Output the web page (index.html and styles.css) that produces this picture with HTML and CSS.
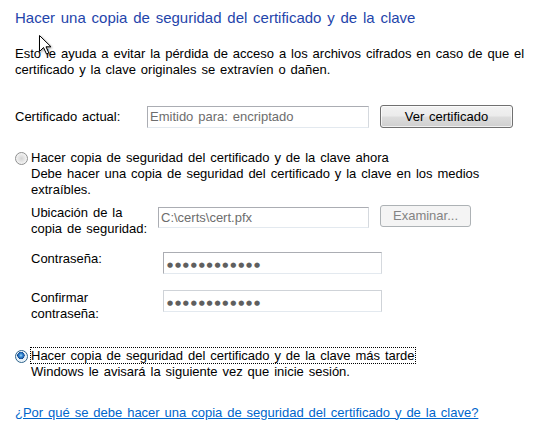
FILE: index.html
```html
<!DOCTYPE html>
<html lang="es">
<head>
<meta charset="utf-8">
<title>Exportar certificado</title>
<link rel="stylesheet" href="styles.css">
</head>
<body>
<div class="page">
  <h1 class="title">Hacer una copia de seguridad del certificado y de la clave</h1>
  <p class="intro">Esto le ayuda a evitar la pérdida de acceso a los archivos cifrados en caso de que el<br>certificado y la clave originales se extravíen o dañen.</p>

  <div class="cert-row">
    <span class="cert-label">Certificado actual:</span>
    <div class="field cert-field">Emitido para: encriptado</div>
    <button class="btn cert-btn">Ver certificado</button>
  </div>

  <div class="option option-now">
    <span class="radio"></span>
    <div class="option-text">
      <div>Hacer copia de seguridad del certificado y de la clave ahora</div>
      <div>Debe hacer una copia de seguridad del certificado y la clave en los medios<br>extraíbles.</div>
    </div>
  </div>

  <div class="subform">
    <div class="sub-row loc-row">
      <span class="loc-label">Ubicación de la<br>copia de seguridad:</span>
      <div class="field loc-field">C:\certs\cert.pfx</div>
      <button class="btn btn-disabled loc-btn" disabled>Examinar...</button>
    </div>
    <div class="sub-row pass-row">
      <span class="pass-label">Contraseña:</span>
      <div class="field pass-field"><span class="dots">●●●●●●●●●●●●</span></div>
    </div>
    <div class="sub-row confirm-row">
      <span class="pass-label">Confirmar<br>contraseña:</span>
      <div class="field pass-field confirm-field"><span class="dots">●●●●●●●●●●●●</span></div>
    </div>
  </div>

  <div class="option option-later">
    <span class="radio radio-checked"></span>
    <div class="option-text">
      <div><span class="focus">Hacer copia de seguridad del certificado y de la clave más tarde</span></div>
      <div>Windows le avisará la siguiente vez que inicie sesión.</div>
    </div>
  </div>

  <a class="help-link" href="#">¿Por qué se debe hacer una copia de seguridad del certificado y de la clave?</a>

  <svg class="cursor" width="14" height="21" viewBox="0 0 14 21" aria-hidden="true">
    <path d="M0.5 0.5 V16.5 L4.5 12.5 L7.5 19 L9.8 18 L7 11.8 H12 Z" fill="#fff" stroke="#000" stroke-width="1" stroke-linejoin="miter"/>
  </svg>
</div>
</body>
</html>
```
FILE: styles.css
```css
html, body {
  margin: 0;
  background: #fff;
}

body {
  font-family: "Liberation Sans", Arial, sans-serif;
  font-size: 13px;
  line-height: 16px;
  word-spacing: 1.3px;
  color: #000;
}

.page {
  position: relative;
  width: 540px;
  height: 436px;
  box-sizing: border-box;
  padding: 8px 0 0 15px;
  overflow: hidden;
}

.title {
  margin: 0;
  font-size: 15px;
  line-height: 20px;
  font-weight: normal;
  word-spacing: 1.6px;
  color: #1f45ab;
  white-space: nowrap;
}

.intro {
  margin: 17.5px 0 0;
  white-space: nowrap;
}

.cert-row {
  display: flex;
  align-items: center;
  height: 23px;
  margin-top: 27.5px;
}

.cert-label {
  width: 132px;
  flex: none;
}

.field {
  box-sizing: border-box;
  height: 22px;
  border: 1px solid #abadb3;
  border-right-color: #d5d9de;
  border-bottom-color: #e3e9ef;
  padding: 0 2px;
  line-height: 20px;
  color: #6d6d6d;
  background: #fff;
  white-space: nowrap;
  overflow: hidden;
  flex: none;
}

.cert-field {
  width: 222px;
}

.btn {
  box-sizing: border-box;
  font-family: inherit;
  font-size: 13px;
  line-height: 16px;
  word-spacing: 1px;
  color: #000;
  border: 1px solid #707070;
  border-radius: 3px;
  background: linear-gradient(#f2f2f2 0%, #ebebeb 48%, #dddddd 52%, #cfcfcf 100%);
  box-shadow: inset 0 0 0 1px rgba(255, 255, 255, 0.7);
  padding: 0;
  flex: none;
}

.cert-btn {
  width: 133px;
  height: 23px;
  margin-left: 11px;
}

.btn-disabled {
  color: #838383;
  border-color: #adb2b5;
  background: #f4f4f4;
  box-shadow: none;
}

.option {
  display: flex;
  align-items: flex-start;
}

.option-now {
  margin-top: 21.5px;
}

.option-later {
  margin-top: 25.5px;
}

.radio {
  box-sizing: border-box;
  width: 13px;
  height: 13px;
  margin: 2px 3px 0 0;
  border-radius: 50%;
  border: 1px solid #8e8f8f;
  background: radial-gradient(circle at 50% 50%, #d4d4d4 0, #e8e8e8 45%, #f4f4f4 70%, #ffffff 100%);
  flex: none;
}

.radio-checked {
  border-color: #2c628b;
  background:
    radial-gradient(circle at 45% 40%, #a9dcf8 0, #3c8fd6 1.5px, #1b5fae 3px, #0f3f80 3.5px, rgba(255,255,255,0) 3.8px),
    radial-gradient(circle at 50% 50%, #cfe4f2 0, #eaf3f9 60%, #ffffff 100%);
}

.option-text {
  white-space: nowrap;
}

.focus {
  outline: 1px dotted #000;
}

.subform {
  padding-left: 16px;
  margin-top: 7.5px;
}

.sub-row {
  display: flex;
  align-items: flex-start;
}

.loc-label {
  width: 127px;
  flex: none;
}

.loc-field {
  width: 211px;
  height: 21px;
  line-height: 19px;
  margin-top: 2px;
}

.loc-btn {
  width: 91px;
  height: 22px;
  margin-left: 11px;
}

.pass-row {
  margin-top: 14px;
}

.confirm-row {
  margin-top: 16px;
}

.pass-label {
  width: 132px;
  flex: none;
}

.pass-field {
  width: 219px;
  margin-top: 1px;
}

.confirm-field {
  margin-top: 0;
  border-color: #cfd3d8;
  border-bottom-color: #e3e9ef;
}

.dots {
  font-family: "DejaVu Sans", sans-serif;
  font-size: 7px;
  letter-spacing: 1.8px;
  color: #5f5f5f;
  padding-left: 1px;
}

.help-link {
  display: block;
  margin-top: 25px;
  color: #0066cc;
  text-decoration: underline;
  white-space: nowrap;
}

.cursor {
  position: absolute;
  left: 39px;
  top: 35px;
  filter: drop-shadow(1px 1px 1px rgba(0, 0, 0, 0.35));
}
```
